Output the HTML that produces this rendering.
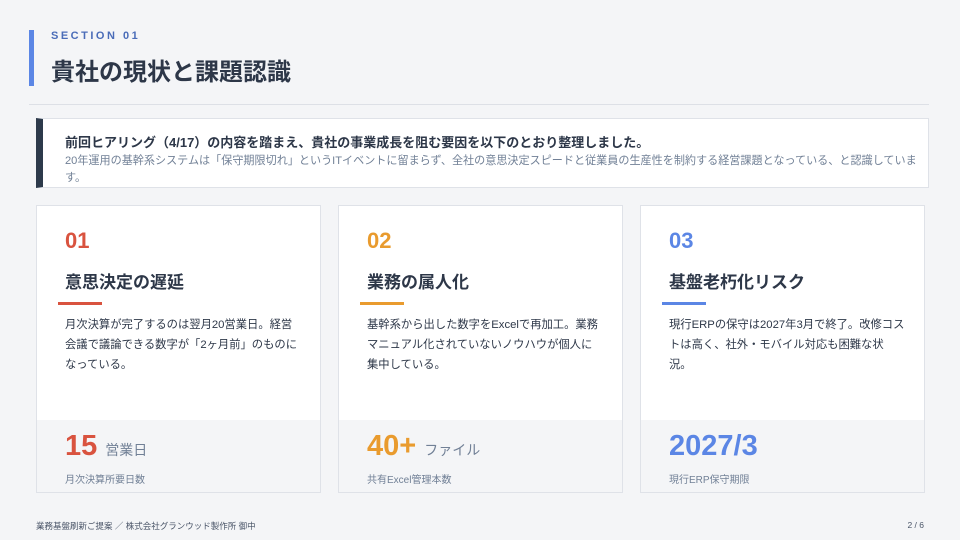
<!DOCTYPE html><html><head><meta charset="utf-8"><style>
*{margin:0;padding:0;box-sizing:border-box}
body{width:960px;height:540px;background:#f4f5f7;font-family:"Liberation Sans","Noto Sans CJK JP",sans-serif;color:#2d3748;position:relative;overflow:hidden}
.bar{position:absolute;left:29px;top:30px;width:5px;height:56px;background:#5b86e5}
.sec{position:absolute;left:51px;top:30px;font-size:11px;font-weight:bold;letter-spacing:2.5px;color:#4a6cb8}
h1{position:absolute;left:51px;top:52px;font-size:24px;font-weight:bold;color:#2d3748}
.hr{position:absolute;left:29px;right:31px;top:104px;height:1px;background:#dde0e6}
.intro{position:absolute;left:36px;top:118px;width:893px;height:70px;background:#fff;border:1px solid #dfe2e8;border-left:7px solid #2d3a4b}
.intro b{position:absolute;left:22px;top:13px;font-size:13px;color:#2d3748}
.intro p{position:absolute;left:22px;top:34px;right:10px;font-size:11.1px;line-height:17px;color:#718096}
.card{position:absolute;top:205px;width:285px;height:288px;background:#fff;border:1px solid #dfe2e8}
.num{position:absolute;left:28px;top:22px;font-size:22px;font-weight:bold}
.tt{position:absolute;left:28px;top:62px;font-size:17px;font-weight:bold;color:#2d3748}
.ln{position:absolute;left:21px;top:96px;width:44px;height:3px}
.ds{position:absolute;left:28px;top:109px;width:236px;font-size:11.3px;line-height:20px;color:#2d3748}
.bt{position:absolute;left:0;right:0;bottom:0;height:72px;background:#f4f5f7}
.big{position:absolute;left:28px;top:10px;font-size:29px;font-weight:bold}
.big span{font-size:14px;font-weight:normal;color:#718096;margin-left:8px}
.lb{position:absolute;left:28px;top:51px;font-size:10px;color:#718096}
.ft{position:absolute;left:36px;top:520px;font-size:8.5px;color:#4a5568}
.pg{position:absolute;right:36px;top:520px;font-size:8.5px;color:#4a5568}
</style></head><body>
<div class="bar"></div><div class="sec">SECTION 01</div><h1>貴社の現状と課題認識</h1><div class="hr"></div>
<div class="intro"><b>前回ヒアリング（4/17）の内容を踏まえ、貴社の事業成長を阻む要因を以下のとおり整理しました。</b><p>20年運用の基幹系システムは「保守期限切れ」というITイベントに留まらず、全社の意思決定スピードと従業員の生産性を制約する経営課題となっている、と認識しています。</p></div>
<div class="card" style="left:36px"><div class="num" style="color:#d9533f">01</div><div class="tt">意思決定の遅延</div><div class="ln" style="background:#d9533f"></div><div class="ds">月次決算が完了するのは翌月20営業日。経営会議で議論できる数字が「2ヶ月前」のものになっている。</div><div class="bt"><div class="big" style="color:#d9533f">15<span>営業日</span></div><div class="lb">月次決算所要日数</div></div></div>
<div class="card" style="left:338px"><div class="num" style="color:#e99b2e">02</div><div class="tt">業務の属人化</div><div class="ln" style="background:#e99b2e"></div><div class="ds">基幹系から出した数字をExcelで再加工。業務マニュアル化されていないノウハウが個人に集中している。</div><div class="bt"><div class="big" style="color:#e99b2e">40+<span>ファイル</span></div><div class="lb">共有Excel管理本数</div></div></div>
<div class="card" style="left:640px"><div class="num" style="color:#5b86e5">03</div><div class="tt">基盤老朽化リスク</div><div class="ln" style="background:#5b86e5"></div><div class="ds">現行ERPの保守は2027年3月で終了。改修コストは高く、社外・モバイル対応も困難な状況。</div><div class="bt"><div class="big" style="color:#5b86e5">2027/3</div><div class="lb">現行ERP保守期限</div></div></div>
<div class="ft">業務基盤刷新ご提案 ／ 株式会社グランウッド製作所 御中</div><div class="pg">2 / 6</div>
</body></html>
